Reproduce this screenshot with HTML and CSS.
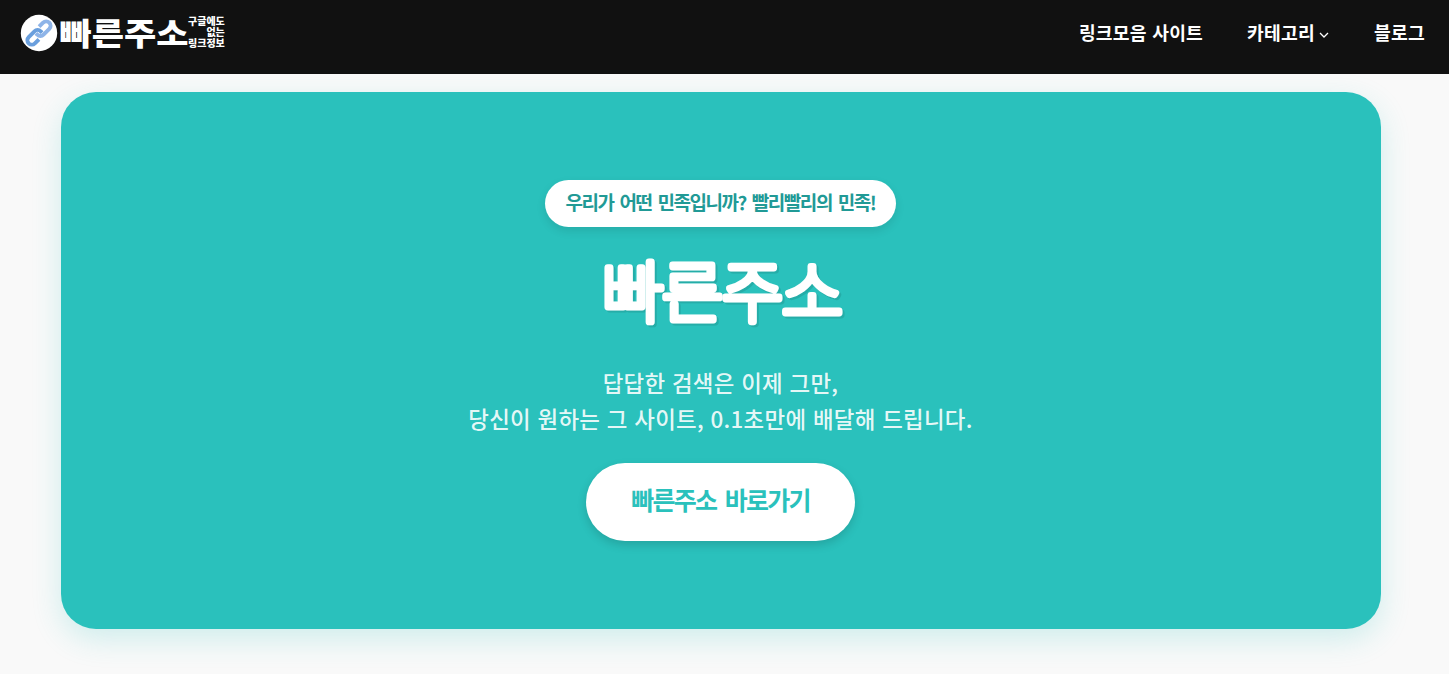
FILE: index.html
```
<!DOCTYPE html>
<html lang="ko">
<head>
    <meta charset="UTF-8">
    <meta name="viewport" content="width=device-width, initial-scale=1.0">
    <title>빠른주소</title>
    <link rel="stylesheet" href="styles.css">
</head>
<body>
    <header class="site-header">
        <a href="#" class="logo">
            <svg class="logo-icon" viewBox="0 0 38 38">
                <circle cx="19" cy="19" r="18.2" fill="#fff"/>
                <g transform="rotate(-45 19 19)" fill="none" stroke-width="3.9">
                    <path d="M14.5 23.4H8.8a4.4 4.4 0 0 1 0-8.8H17a4.4 4.4 0 0 1 4.4 4.4v2" stroke="#6a9fdd"/>
                    <path d="M23.5 14.6h5.7a4.4 4.4 0 0 1 0 8.8H21a4.4 4.4 0 0 1-4.4-4.4v-2" stroke="#8eb4e8"/>
                </g>
            </svg>
            <svg class="logo-name" viewBox="0 0 130 50">
                <text transform="scale(1.13 1)" x="0.5" y="37">빠른주소</text>
            </svg>
            <span class="logo-sub">구글에도<br>없는<br>링크정보</span>
        </a>
        <nav class="menu">
            <a href="#">링크모음 사이트</a>
            <a href="#">카테고리<svg class="arrow" viewBox="0 0 10 6"><path d="M1 1l4 4 4-4"/></svg></a>
            <a href="#">블로그</a>
        </nav>
    </header>

    <main class="hero">
        <div class="badge"><span>우리가 어떤 민족입니까? 빨리빨리의 민족!</span></div>
        <h1>
            <svg class="hero-title" viewBox="0 0 260 110">
                <text x="11" y="80">빠른주소</text>
            </svg>
        </h1>
        <p>답답한 검색은 이제 그만,<br>당신이 원하는 그 사이트, 0.1초만에 배달해 드립니다.</p>
        <a href="#" class="hero-btn"><span>빠른주소 바로가기</span></a>
    </main>
</body>
</html>
```

FILE: styles.css
```
* {
    box-sizing: border-box;
}

body {
    margin: 0;
    min-height: 100vh;
    background-color: #f9f9f9;
    font-family: "Noto Sans CJK KR", sans-serif;
}

a {
    color: inherit;
    text-decoration: none;
}

.site-header {
    display: flex;
    justify-content: space-between;
    height: 74px;
    padding: 0 24px 8px 20px;
    background-color: #111;
    color: #fff;
}

.logo {
    display: flex;
    align-items: center;
}

.logo-icon {
    width: 38px;
    height: 38px;
}

.logo-name {
    width: 130px;
    height: 50px;
    margin-left: 1px;
    fill: #fff;
    font-size: 31px;
    font-weight: 900;
}

.logo-sub {
    margin-left: -1px;
    padding-bottom: 3px;
    font-size: 10px;
    font-weight: 900;
    line-height: 11px;
    text-align: right;
}

.menu {
    display: flex;
    align-items: center;
    gap: 44px;
    padding-bottom: 2px;
    font-size: 18.2px;
    font-weight: 700;
    letter-spacing: 0.25px;
}

.arrow {
    width: 10px;
    height: 6px;
    margin: 0 1px 0 4px;
    vertical-align: 2px;
    fill: none;
    stroke: #fff;
    stroke-width: 1.3;
}

.hero {
    display: flex;
    flex-direction: column;
    align-items: center;
    width: 1320px;
    height: 537px;
    margin: 18px 0 0 61px;
    padding: 88px 1px 0 0;
    border-radius: 35px;
    background-color: #2ac1bc;
    box-shadow: 0 10px 30px rgba(42, 193, 188, 0.2);
    text-align: center;
}

.badge {
    display: flex;
    align-items: center;
    justify-content: center;
    width: 351px;
    height: 47px;
    padding-bottom: 4px;
    border-radius: 50px;
    background-color: #fff;
    box-shadow: 0 4px 10px rgba(0, 0, 0, 0.1);
    color: #219a96;
    font-size: 19px;
    font-weight: 700;
    letter-spacing: -1.45px;
    word-spacing: 2px;
    white-space: nowrap;
}

.hero h1 {
    height: 110px;
    margin: 10px 0 0;
}

.hero-title {
    display: block;
    width: 260px;
    height: 110px;
    filter: drop-shadow(2px 2px 0 rgba(0, 0, 0, 0.1));
}

.hero-title text {
    fill: #fff;
    stroke: #fff;
    stroke-width: 6.8px;
    stroke-linejoin: round;
    font-size: 67px;
    font-weight: 100;
    letter-spacing: -1.8px;
}

.hero p {
    margin: 17px 0 0;
    color: rgba(255, 255, 255, 0.9);
    font-size: 22.4px;
    font-weight: 500;
    line-height: 36px;
    letter-spacing: 0.3px;
}

.hero-btn {
    display: flex;
    align-items: center;
    justify-content: center;
    width: 269px;
    height: 78px;
    margin-top: 27px;
    padding-bottom: 6px;
    border-radius: 50px;
    background-color: #fff;
    box-shadow: 0 4px 10px rgba(0, 0, 0, 0.15);
    color: #2ac1bc;
    font-size: 25px;
    font-weight: 700;
    letter-spacing: -1.7px;
    word-spacing: 3px;
}
```
